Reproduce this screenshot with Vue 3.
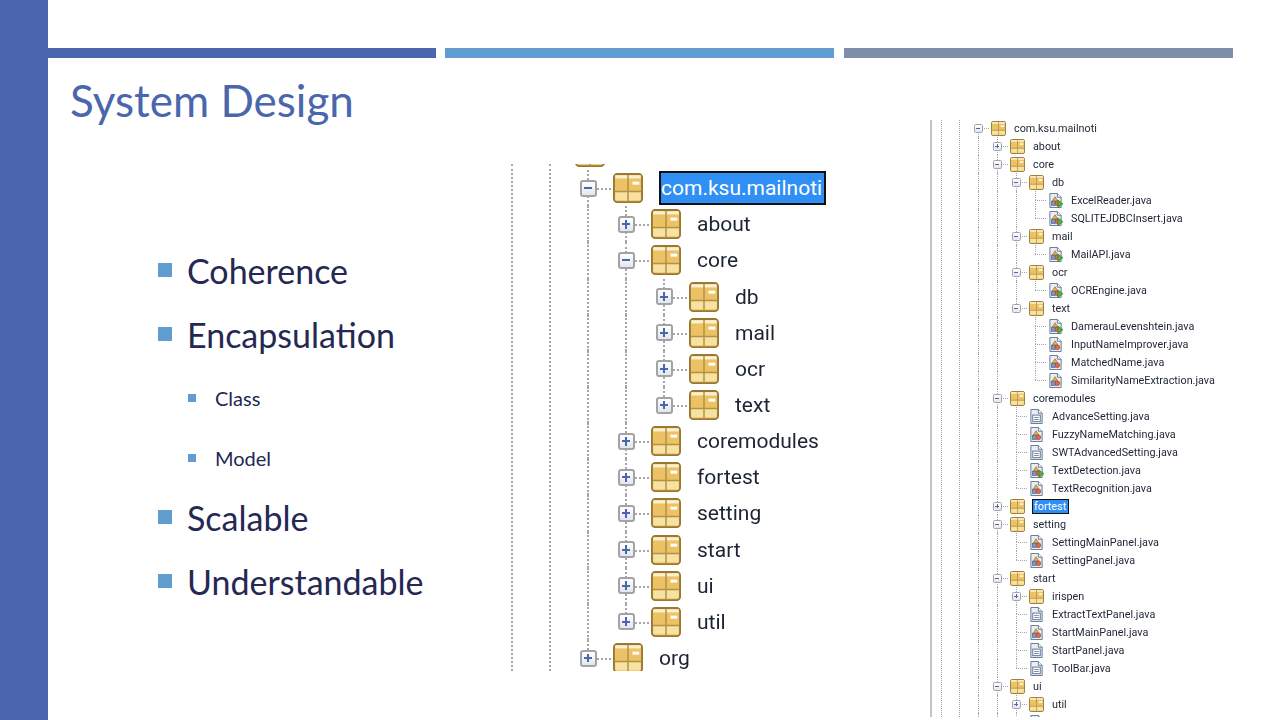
<template>
  <div class="slide">
    <div class="rail"></div>
    <div class="main">
      <div class="bars">
        <span class="bar bar--one"></span>
        <span class="bar bar--two"></span>
        <span class="bar bar--three"></span>
      </div>
      <div class="body">
        <div class="intro">
          <h1 class="title">System Design</h1>
          <ul class="points">
            <li v-for="point in points" :key="point.label" class="point">
              <div class="point__row">{{ point.label }}</div>
              <ul v-if="point.items" class="subpoints">
                <li v-for="item in point.items" :key="item" class="subpoint">{{ item }}</li>
              </ul>
            </li>
          </ul>
        </div>

        <div v-for="tree in trees" :key="tree.id" :class="['tree', `tree--${tree.id}`]">
          <span v-for="rail in tree.rails" :key="rail" class="rail-line" :style="{ left: rail + 'px' }"></span>
          <div class="tree__rows">
            <div v-for="(row, i) in tree.rows" :key="i" class="row" :style="{ '--d': row.depth }">
              <span
                v-for="guide in row.guides"
                :key="guide.depth + guide.part"
                :class="['guide', `guide--${guide.part}`]"
                :style="{ '--d': guide.depth }"
              ></span>
              <span :class="['slot', { 'slot--empty': row.depth < 0 }]">
                <span v-if="row.kind === 'open' || row.kind === 'closed'" :class="['toggle', `toggle--${row.kind}`]"></span>
              </span>
              <svg v-if="row.kind === 'open' || row.kind === 'closed' || row.kind === 'pkg'" class="icon" viewBox="0 0 16 16">
                <rect x="0.5" y="0.5" width="15" height="15" rx="1.8" fill="#ecc264" stroke="#987832" />
                <rect x="1.2" y="1.2" width="13.6" height="1.7" fill="#fbf0cf" />
                <rect x="1.2" y="10.2" width="13.6" height="4.4" fill="#f8e2a2" />
                <rect x="10.4" y="4.6" width="3.6" height="1.6" fill="#fff" />
                <path d="M8 1V15.4M1 9.8H15" stroke="#b39247" stroke-width="0.8" fill="none" />
              </svg>
              <svg v-else class="icon" viewBox="0 0 16 16">
                <path d="M2 0.5H10L14 4.5V15.5H2Z" fill="#e9eef4" stroke="#62748e" />
                <path d="M10 0.5V4.5H14" fill="#fff" stroke="#62748e" />
                <template v-if="row.kind === 'plain'">
                  <rect x="4" y="6.5" width="8" height="7" fill="#fff" stroke="#5a7299" />
                  <path d="M5.5 9H10.5M5.5 11.2H10.5" stroke="#75859c" />
                </template>
                <template v-else>
                  <path d="M7.5 4L10.5 8.5H4.5Z" fill="#e8b04a" stroke="#946b22" stroke-width="0.7" />
                  <rect x="3.6" y="8.8" width="4.4" height="4.4" fill="#7d97c4" stroke="#455f8e" stroke-width="0.7" />
                  <circle cx="10" cy="11" r="2.5" fill="#dd6a4d" stroke="#9c3d2a" stroke-width="0.7" />
                </template>
                <path v-if="row.kind === 'run'" d="M10.5 7.5L16 11.5L10.5 15.5Z" fill="#56b13c" stroke="#2f7a22" stroke-width="0.7" />
              </svg>
              <span :class="['label', { 'label--selected': row.selected }]">{{ row.name }}</span>
            </div>
          </div>
        </div>
      </div>
    </div>
  </div>
</template>

<script setup>
const points = [
  { label: 'Coherence' },
  { label: 'Encapsulation', items: ['Class', 'Model'] },
  { label: 'Scalable' },
  { label: 'Understandable' },
];

const pkg = (name, depth, kind = 'open', selected = false) => ({ name, depth, kind, selected });
const file = (name, depth, kind = 'plain') => ({ name, depth, kind, selected: false });

const overviewRows = [
  pkg('', -1, 'pkg'),
  pkg('com.ksu.mailnoti', 0, 'open', true),
  pkg('about', 1, 'closed'),
  pkg('core', 1),
  pkg('db', 2, 'closed'),
  pkg('mail', 2, 'closed'),
  pkg('ocr', 2, 'closed'),
  pkg('text', 2, 'closed'),
  pkg('coremodules', 1, 'closed'),
  pkg('fortest', 1, 'closed'),
  pkg('setting', 1, 'closed'),
  pkg('start', 1, 'closed'),
  pkg('ui', 1, 'closed'),
  pkg('util', 1, 'closed'),
  pkg('org', 0, 'closed'),
];

const detailRows = [
  pkg('com.ksu.mailnoti', 0),
  pkg('about', 1, 'closed'),
  pkg('core', 1),
  pkg('db', 2),
  file('ExcelReader.java', 3, 'run'),
  file('SQLITEJDBCInsert.java', 3, 'run'),
  pkg('mail', 2),
  file('MailAPI.java', 3, 'run'),
  pkg('ocr', 2),
  file('OCREngine.java', 3, 'run'),
  pkg('text', 2),
  file('DamerauLevenshtein.java', 3, 'run'),
  file('InputNameImprover.java', 3, 'form'),
  file('MatchedName.java', 3, 'form'),
  file('SimilarityNameExtraction.java', 3, 'form'),
  pkg('coremodules', 1),
  file('AdvanceSetting.java', 2),
  file('FuzzyNameMatching.java', 2, 'form'),
  file('SWTAdvancedSetting.java', 2),
  file('TextDetection.java', 2, 'run'),
  file('TextRecognition.java', 2, 'form'),
  pkg('fortest', 1, 'closed', true),
  pkg('setting', 1),
  file('SettingMainPanel.java', 2, 'form'),
  file('SettingPanel.java', 2, 'form'),
  pkg('start', 1),
  pkg('irispen', 2, 'closed'),
  file('ExtractTextPanel.java', 2),
  file('StartMainPanel.java', 2, 'form'),
  file('StartPanel.java', 2),
  file('ToolBar.java', 2),
  pkg('ui', 1),
  pkg('util', 2, 'closed'),
  file('', 2),
  pkg('', 1, 'closed'),
  pkg('', 0, 'closed'),
];

function hasNextSibling(rows, i, depth) {
  for (let j = i + 1; j < rows.length; j++) {
    if (rows[j].depth < depth) return false;
    if (rows[j].depth === depth) return true;
  }
  return false;
}

// work out which dotted tree lines cross each row
function withGuides(rows) {
  return rows.map((row, i) => {
    const guides = [];
    for (let d = row.depth; d >= 0; d--) {
      const next = hasNextSibling(rows, i, d);
      if (d === row.depth) {
        if (i > 0) guides.push({ depth: d, part: 'top' });
        if (next) guides.push({ depth: d, part: 'bottom' });
      } else if (next) {
        guides.push({ depth: d, part: 'full' });
      }
    }
    return { ...row, guides };
  });
}

const trees = [
  { id: 'big', rails: [1, 39], rows: withGuides(overviewRows) },
  { id: 'small', rails: [11, 29], rows: withGuides(detailRows) },
];
</script>

<style scoped>
.slide {
  display: flex;
  width: 1280px;
  height: 720px;
  overflow: hidden;
  background: #fff;
  font-family: Lato, "Liberation Sans", sans-serif;
}
.rail {
  width: 48px;
  flex: none;
  background: #4a66ac;
}
.main {
  flex: 1;
  min-width: 0;
  padding-top: 48px;
}
.bars {
  display: flex;
  height: 10px;
}
.bar {
  flex: none;
  width: 389px;
}
.bar--one {
  width: 388px;
  background: #4a66ac;
}
.bar--two {
  margin-left: 9px;
  background: #629dd1;
}
.bar--three {
  margin-left: 10px;
  background: #7f8fa9;
}
.body {
  display: flex;
  align-items: flex-start;
}
.intro {
  width: 462px;
  flex: none;
}
.title {
  margin: 17px 0 0 22px;
  font-size: 44px;
  line-height: 50px;
  font-weight: 400;
  color: #4a66ac;
}
.points {
  margin: 113px 0 0;
  padding: 0 0 0 110px;
  list-style: none;
  color: #242852;
}
.point__row {
  display: flex;
  align-items: center;
  gap: 15px;
  height: 64px;
  font-size: 34px;
}
.point__row::before {
  content: '';
  width: 14px;
  height: 14px;
  background: #629dd1;
}
.subpoints {
  display: flex;
  flex-direction: column;
  gap: 6px;
  margin: 5px 0 0;
  padding: 0 0 0 30px;
  list-style: none;
}
.subpoint {
  display: flex;
  align-items: center;
  gap: 19px;
  height: 54px;
  font-size: 20px;
}
.subpoint::before {
  content: '';
  width: 8px;
  height: 8px;
  background: #629dd1;
}

.tree {
  position: relative;
  flex: none;
  overflow: hidden;
  color: #1d2433;
  font-family: Roboto, "Liberation Sans", sans-serif;
}
.tree--big {
  --row: 36.15px;
  --indent: 38px;
  --origin: 78px;
  --slot: 20px;
  --toggle: 17px;
  --icon: 30px;
  --gap-a: 15px;
  --gap-b: 16px;
  --line: 2px;
  --dot: #a6a6a6;
  width: 420px;
  height: 507px;
  margin-top: 106px;
  font-size: 21px;
  filter: blur(0.6px);
}
.tree--small {
  --row: 18px;
  --indent: 19px;
  --origin: 48px;
  --slot: 10px;
  --toggle: 9px;
  --icon: 15px;
  --gap-a: 8px;
  --gap-b: 8px;
  --line: 1px;
  --dot: #a6a6a6;
  width: 300px;
  height: 597px;
  margin-top: 62px;
  font-size: 10.8px;
  filter: blur(0.35px);
}
.tree--small::before {
  content: '';
  position: absolute;
  left: 0;
  top: 0;
  bottom: 0;
  width: 2px;
  background: #c4c4c4;
}
.tree--big .tree__rows {
  margin-top: -30px;
}
.tree--small .tree__rows {
  margin-top: -1px;
}
.rail-line {
  position: absolute;
  top: 0;
  bottom: 0;
  border-left: var(--line) dotted var(--dot);
}
.row {
  position: relative;
  display: flex;
  align-items: center;
  height: var(--row);
  padding-left: calc(var(--origin) + var(--d) * var(--indent) - var(--slot) / 2);
  white-space: nowrap;
}
.guide {
  position: absolute;
  left: calc(var(--origin) + var(--d) * var(--indent) - var(--line) / 2);
  top: 0;
  bottom: 0;
  border-left: var(--line) dotted var(--dot);
}
.guide--top {
  bottom: 50%;
}
.guide--bottom {
  top: 50%;
}
.slot {
  position: relative;
  display: flex;
  align-items: center;
  justify-content: center;
  width: var(--slot);
  height: 100%;
  flex: none;
}
.slot::after {
  content: '';
  position: absolute;
  left: 50%;
  top: 50%;
  width: calc(var(--slot) / 2 + var(--gap-a) - 2px);
  border-top: var(--line) dotted var(--dot);
}
.slot--empty::after {
  display: none;
}
.toggle {
  position: relative;
  z-index: 1;
  box-sizing: border-box;
  width: var(--toggle);
  height: var(--toggle);
  border: var(--line) solid #a3a3a3;
  border-radius: 18%;
  background: linear-gradient(#fff, #e2e6ee);
}
.toggle::before,
.toggle::after {
  content: '';
  position: absolute;
  background: #4a66ac;
}
.toggle::before {
  left: 16%;
  right: 16%;
  top: calc(50% - var(--line) / 2);
  height: var(--line);
}
.toggle--closed::after {
  top: 16%;
  bottom: 16%;
  left: calc(50% - var(--line) / 2);
  width: var(--line);
}
.icon {
  position: relative;
  width: var(--icon);
  height: var(--icon);
  margin-left: var(--gap-a);
  flex: none;
}
.label {
  position: relative;
  margin-left: var(--gap-b);
}
.label--selected {
  color: #fff;
  background: #2f8ff5;
  outline: var(--line) solid #111;
  outline-offset: calc(0px - var(--line));
}
.tree--big .label--selected {
  margin-left: 16px;
  padding: 5px 4px 5px 2px;
}
.tree--small .label--selected {
  margin-left: 7px;
  padding: 1px 3px 1px 2px;
}
</style>
